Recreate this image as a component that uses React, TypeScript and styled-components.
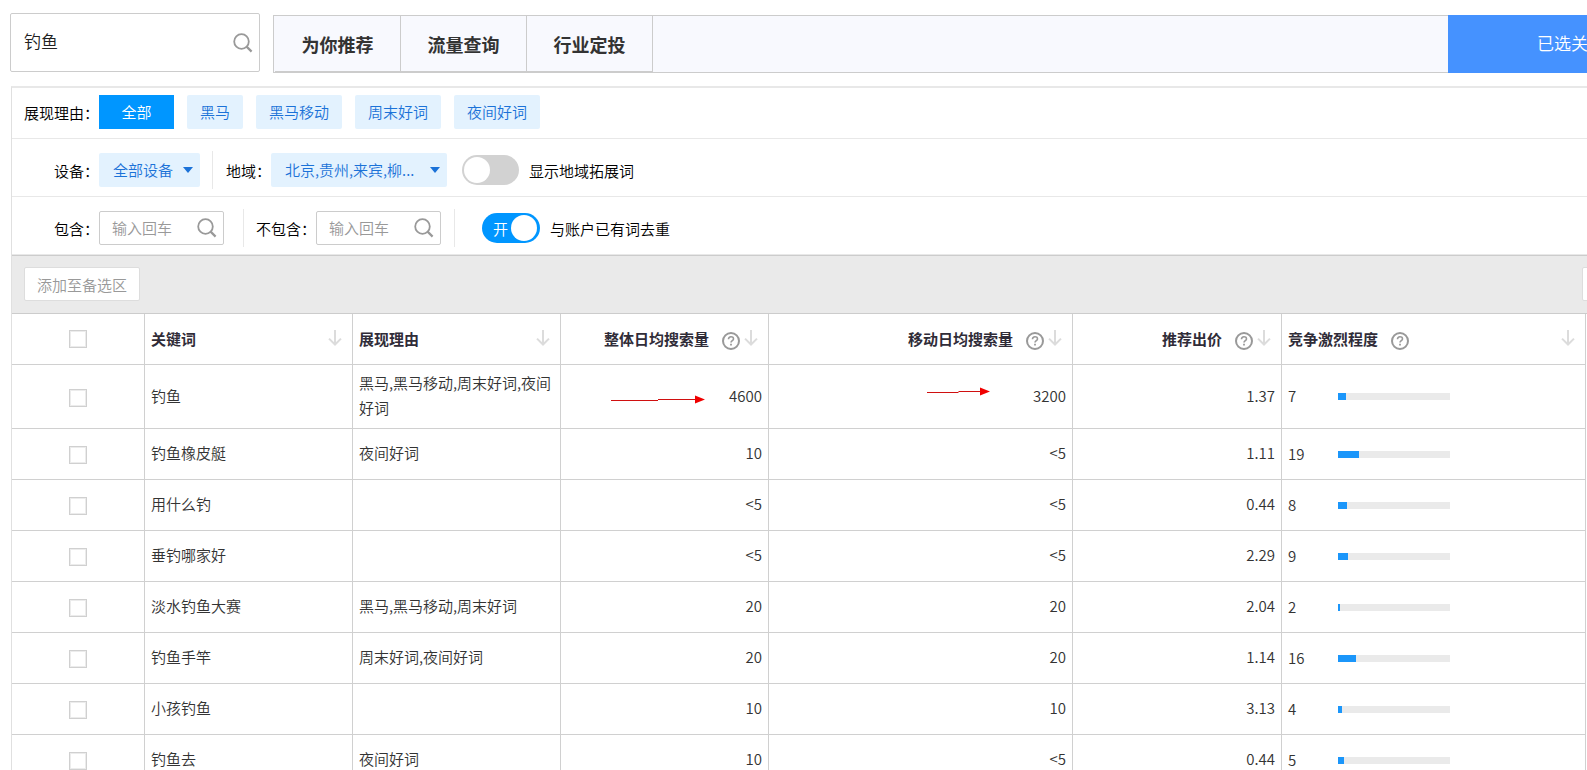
import React from "react";
import styled, { createGlobalStyle } from "styled-components";

const GlobalStyle = createGlobalStyle`
  * { box-sizing: border-box; }
  body {
    margin: 0;
    background: #fff;
    color: #000;
    font: 350 15px/25px "Noto Sans CJK SC", "Microsoft YaHei", sans-serif;
  }
  button, input, select { font: inherit; margin: 0; }
`;

const Page = styled.div`
  height: 100vh;
  overflow: hidden;
`;

const TopBar = styled.header`
  display: flex;
  gap: 13px;
  padding: 13px 0 13px 10px;
`;

const KeywordSearch = styled.label`
  display: flex;
  align-items: center;
  flex: none;
  width: 250px;
  height: 59px;
  padding: 0 6px 0 13px;
  border: 1px solid #ccc;
  border-radius: 2px;
`;

const KeywordInput = styled.input`
  flex: 1;
  min-width: 0;
  padding: 0 0 4px;
  border: 0;
  outline: 0;
  color: #222;
  font-size: 17px;
`;

const TabBar = styled.nav`
  display: flex;
  flex: 1;
  min-width: 0;
  height: 58px;
  margin-top: 2px;
  background: #f8f9fe;
`;

const Tabs = styled.div`
  display: flex;
  flex: 1;
  padding-left: 1px;
  border: solid #ccc;
  border-width: 1px 0 1px 1px;
`;

const Tab = styled.button`
  width: 126px;
  padding: 2px 0 0;
  border: solid #ccc;
  border-width: 0 1px 1px 0;
  background: none;
  color: #333;
  font-size: 18px;
  font-weight: 700;
`;

const SelectedWords = styled.button`
  flex: none;
  width: 139px;
  padding: 0 0 4px 89px;
  overflow: hidden;
  border: 0;
  background: #4592ff;
  color: #fff;
  font-size: 17px;
  text-align: left;
  white-space: nowrap;
`;

const Panel = styled.main`
  margin-left: 11px;
  border-left: 1px solid #e0e0e0;
  border-top: 2px solid #e8e8e8;
`;

const FilterRow = styled.div<{ $height: number; $top?: number; $bottom?: number }>`
  display: flex;
  align-items: center;
  height: ${(p) => p.$height}px;
  padding: ${(p) => p.$top ?? 0}px 0 ${(p) => p.$bottom ?? 0}px 12px;
  border-bottom: 1px solid #e8e8e8;
`;

const FilterLabel = styled.label<{ $width: number }>`
  flex: none;
  width: ${(p) => p.$width}px;
  text-align: right;
  white-space: nowrap;
`;

const Chips = styled.div`
  display: flex;
  gap: 13px;
`;

const Chip = styled.button<{ $active?: boolean }>`
  min-width: ${(p) => (p.$active ? 75 : 0)}px;
  height: 34px;
  padding: 0 13px 1px;
  border: 0;
  border-radius: ${(p) => (p.$active ? 0 : 2)}px;
  background: ${(p) => (p.$active ? "#0096ff" : "#e3f2fe")};
  color: ${(p) => (p.$active ? "#fff" : "#1b72d8")};
`;

const SelectBox = styled.div<{ $width: number }>`
  position: relative;
  flex: none;
  width: ${(p) => p.$width}px;
  height: 34px;
`;

const Select = styled.select`
  width: 100%;
  height: 100%;
  padding: 0 0 1px 14px;
  appearance: none;
  border: 0;
  border-radius: 2px;
  background: #e3f2fe;
  color: #1b72d8;
`;

const Caret = styled.svg`
  position: absolute;
  top: 14px;
  right: 7px;
  pointer-events: none;
`;

const Divider = styled.span<{ $before: number; $after: number }>`
  flex: none;
  width: 1px;
  height: 38px;
  margin: 0 ${(p) => p.$after}px 0 ${(p) => p.$before}px;
  background: #e8e8e8;
`;

const WordBox = styled.div`
  display: flex;
  align-items: center;
  flex: none;
  width: 125px;
  height: 34px;
  padding: 0 6px 0 12px;
  border: 1px solid #ccc;
  border-radius: 2px;
`;

const WordInput = styled.input`
  flex: 1;
  min-width: 0;
  padding: 0 0 1px;
  border: 0;
  outline: 0;
  &::placeholder { color: #999; }
`;

const SwitchLabel = styled.label<{ $before: number }>`
  display: flex;
  align-items: center;
  gap: 10px;
  margin-left: ${(p) => p.$before}px;
  white-space: nowrap;
`;

const SwitchTrack = styled.span<{ $on?: boolean }>`
  display: flex;
  align-items: center;
  justify-content: ${(p) => (p.$on ? "flex-end" : "flex-start")};
  gap: 3px;
  position: relative;
  width: ${(p) => (p.$on ? 58 : 57)}px;
  height: 30px;
  padding: 0 ${(p) => (p.$on ? 3 : 2)}px;
  border-radius: 15px;
  background: ${(p) => (p.$on ? "#0096ff" : "#d2d2d2")};
  color: #fff;
  &::after {
    content: "";
    width: 26px;
    height: 26px;
    border-radius: 50%;
    background: #fff;
  }
`;

const SwitchInput = styled.input`
  position: absolute;
  inset: 0;
  width: 100%;
  height: 100%;
  opacity: 0;
`;

const Toolbar = styled.div`
  display: flex;
  align-items: center;
  justify-content: space-between;
  height: 59px;
  padding: 0 0 1px 12px;
  overflow: hidden;
  border: solid #ccc;
  border-width: 1px 0;
  background: #eaeaea;
`;

const ToolButton = styled.button`
  height: 34px;
  padding: 0 12px;
  border: 1px solid #ddd;
  border-radius: 2px;
  background: #fff;
  color: #999;
`;

const EdgeButton = styled(ToolButton)`
  flex: none;
  width: 90px;
  margin-right: -85px;
`;

const TableWrap = styled.div`
  padding-right: 1px;
`;

const Table = styled.table`
  width: 100%;
  table-layout: fixed;
  border-collapse: separate;
  border-spacing: 0;
  color: #333;
`;

const HeadCell = styled.th`
  height: 51px;
  padding: 0 6px;
  border: solid #d0d0d0;
  border-width: 0 1px 1px 0;
  font-weight: 700;
  text-align: left;
  color: #302c38;
`;

const HeadContent = styled.div<{ $right?: boolean }>`
  display: flex;
  align-items: center;
  justify-content: ${(p) => (p.$right ? "flex-end" : "flex-start")};
  padding: 0 4px 2px 0;
  white-space: nowrap;
`;

const IconButton = styled.button<{ $push?: boolean; $help?: boolean }>`
  display: flex;
  margin-left: ${(p) => (p.$push ? "auto" : p.$help ? "13px" : "4px")};
  padding: ${(p) => (p.$help ? "5px 0 0" : "0")};
  border: 0;
  background: none;
`;

const Cell = styled.td<{ $right?: boolean }>`
  position: relative;
  height: 51px;
  padding: 5px 6px 8px;
  border: solid #d0d0d0;
  border-width: 0 1px 1px 0;
  text-align: ${(p) => (p.$right ? "right" : "left")};
`;

const CheckWrap = styled.div<{ $top?: number }>`
  display: flex;
  justify-content: center;
  padding-top: ${(p) => p.$top ?? 0}px;
`;

const Check = styled.input`
  width: 18px;
  height: 18px;
  appearance: none;
  border: 1px solid #d0d0d0;
  box-shadow: inset 0 0 0 1px #ececec;
  background: #fff;
`;

const Level = styled.div`
  display: flex;
  align-items: center;
  padding-top: 3px;
`;

const LevelValue = styled.span`
  width: 50px;
  padding-bottom: 2px;
`;

const LevelTrack = styled.span`
  width: 112px;
  height: 7px;
  background: #eaeaea;
`;

const LevelFill = styled.span`
  display: block;
  height: 7px;
  background: #1b96fa;
`;

const Mark = styled.svg<{ $top: number; $right: number }>`
  position: absolute;
  top: ${(p) => p.$top}px;
  right: ${(p) => p.$right}px;
`;

const SearchIcon = () => (
  <svg width="20" height="20" viewBox="0 0 20 20" fill="none" stroke="#999" aria-hidden="true">
    <circle cx="8.5" cy="8.5" r="7.3" strokeWidth="1.8" />
    <path d="M13.6 13.6L18.6 18.6" strokeWidth="2.2" />
  </svg>
);

const HelpIcon = () => (
  <svg width="18" height="18" viewBox="0 0 18 18" fill="none" stroke="#999" aria-hidden="true">
    <circle cx="9" cy="9" r="8" strokeWidth="2" />
    <path d="M6.5 7.2C6.5 3.9 11.5 3.9 11.5 6.9C11.5 8.7 9 8.7 9 10.6" strokeWidth="1.6" />
    <path d="M9 11.8V13.6" strokeWidth="1.8" />
  </svg>
);

const SortIcon = () => (
  <svg width="14" height="16" viewBox="0 0 14 16" fill="none" stroke="#dcdcdc" strokeWidth="2" aria-hidden="true">
    <path d="M7 0V14.4M1 8.6L7 14.5L13 8.6" />
  </svg>
);

const Arrow = ({ length, top, right }: { length: number; top: number; right: number }) => (
  <Mark $top={top} $right={right} width={length} height="10" viewBox={`0 0 ${length} 10`} aria-hidden="true">
    <path d={`M0 5.5H${length / 2}M${length / 2} 4.5H${length - 8}`} stroke="#d01010" />
    <path d={`M${length - 10} 0.5L${length} 4.5L${length - 10} 8.5Z`} fill="#f00000" />
  </Mark>
);

const CaretIcon = () => (
  <Caret width="10" height="6" viewBox="0 0 10 6" aria-hidden="true">
    <path d="M0 0H10L5 6Z" fill="#1b72d8" />
  </Caret>
);

const reasons = ["全部", "黑马", "黑马移动", "周末好词", "夜间好词"];

const columns = [
  { title: "关键词" },
  { title: "展现理由" },
  { title: "整体日均搜索量", right: true, help: true },
  { title: "移动日均搜索量", right: true, help: true },
  { title: "推荐出价", right: true, help: true },
  { title: "竞争激烈程度", help: true },
];

const rows = [
  { word: "钓鱼", reason: "黑马,黑马移动,周末好词,夜间好词", total: "4600", mobile: "3200", bid: "1.37", level: 7, marked: true },
  { word: "钓鱼橡皮艇", reason: "夜间好词", total: "10", mobile: "<5", bid: "1.11", level: 19 },
  { word: "用什么钓", reason: "", total: "<5", mobile: "<5", bid: "0.44", level: 8 },
  { word: "垂钓哪家好", reason: "", total: "<5", mobile: "<5", bid: "2.29", level: 9 },
  { word: "淡水钓鱼大赛", reason: "黑马,黑马移动,周末好词", total: "20", mobile: "20", bid: "2.04", level: 2 },
  { word: "钓鱼手竿", reason: "周末好词,夜间好词", total: "20", mobile: "20", bid: "1.14", level: 16 },
  { word: "小孩钓鱼", reason: "", total: "10", mobile: "10", bid: "3.13", level: 4 },
  { word: "钓鱼去", reason: "夜间好词", total: "10", mobile: "<5", bid: "0.44", level: 5 },
];

export default function App() {
  return (
    <Page>
      <GlobalStyle />
      <TopBar>
        <KeywordSearch>
          <KeywordInput aria-label="关键词" defaultValue="钓鱼" />
          <SearchIcon />
        </KeywordSearch>
        <TabBar>
          <Tabs>
            <Tab>为你推荐</Tab>
            <Tab>流量查询</Tab>
            <Tab>行业定投</Tab>
          </Tabs>
          <SelectedWords>已选关</SelectedWords>
        </TabBar>
      </TopBar>

      <Panel>
        <FilterRow $height={51} $bottom={2}>
          <FilterLabel as="span" $width={75}>展现理由：</FilterLabel>
          <Chips>
            {reasons.map((r, i) => (
              <Chip key={r} $active={i === 0}>{r}</Chip>
            ))}
          </Chips>
        </FilterRow>

        <FilterRow $height={58} $top={5}>
          <FilterLabel $width={75} htmlFor="device">设备：</FilterLabel>
          <SelectBox $width={101}>
            <Select id="device"><option>全部设备</option></Select>
            <CaretIcon />
          </SelectBox>
          <Divider $before={12} $after={13} />
          <FilterLabel $width={45} htmlFor="region">地域：</FilterLabel>
          <SelectBox $width={176}>
            <Select id="region"><option>北京,贵州,来宾,柳...</option></Select>
            <CaretIcon />
          </SelectBox>
          <SwitchLabel $before={15}>
            <SwitchTrack><SwitchInput type="checkbox" /></SwitchTrack>
            显示地域拓展词
          </SwitchLabel>
        </FilterRow>

        <FilterRow $height={58} $top={5}>
          <FilterLabel $width={75} htmlFor="include">包含：</FilterLabel>
          <WordBox>
            <WordInput id="include" placeholder="输入回车" />
            <SearchIcon />
          </WordBox>
          <Divider $before={19} $after={12} />
          <FilterLabel $width={60} htmlFor="exclude">不包含：</FilterLabel>
          <WordBox>
            <WordInput id="exclude" placeholder="输入回车" />
            <SearchIcon />
          </WordBox>
          <Divider $before={13} $after={0} />
          <SwitchLabel $before={27}>
            <SwitchTrack $on>
              <SwitchInput type="checkbox" defaultChecked />
              开
            </SwitchTrack>
            与账户已有词去重
          </SwitchLabel>
        </FilterRow>

        <Toolbar>
          <ToolButton>添加至备选区</ToolButton>
          <EdgeButton aria-label="更多" />
        </Toolbar>

        <TableWrap>
          <Table>
            <colgroup>
              <col width="133" />
              <col width="208" />
              <col width="208" />
              <col width="208" />
              <col />
              <col width="209" />
              <col />
            </colgroup>
            <thead>
              <tr>
                <HeadCell>
                  <CheckWrap><Check type="checkbox" aria-label="全选" /></CheckWrap>
                </HeadCell>
                {columns.map((c) => (
                  <HeadCell key={c.title}>
                    <HeadContent $right={c.right}>
                      {c.title}
                      {c.help && <IconButton $help aria-label="说明"><HelpIcon /></IconButton>}
                      <IconButton $push={!c.right} aria-label="排序"><SortIcon /></IconButton>
                    </HeadContent>
                  </HeadCell>
                ))}
              </tr>
            </thead>
            <tbody>
              {rows.map((r) => (
                <tr key={r.word}>
                  <Cell>
                    <CheckWrap $top={5}><Check type="checkbox" aria-label={r.word} /></CheckWrap>
                  </Cell>
                  <Cell>{r.word}</Cell>
                  <Cell>{r.reason}</Cell>
                  <Cell $right>
                    {r.marked && <Arrow length={94} top={30} right={63} />}
                    {r.total}
                  </Cell>
                  <Cell $right>
                    {r.marked && <Arrow length={63} top={22} right={82} />}
                    {r.mobile}
                  </Cell>
                  <Cell $right>{r.bid}</Cell>
                  <Cell>
                    <Level>
                      <LevelValue>{r.level}</LevelValue>
                      <LevelTrack>
                        <LevelFill style={{ width: `${r.level}%` }} />
                      </LevelTrack>
                    </Level>
                  </Cell>
                </tr>
              ))}
            </tbody>
          </Table>
        </TableWrap>
      </Panel>
    </Page>
  );
}
